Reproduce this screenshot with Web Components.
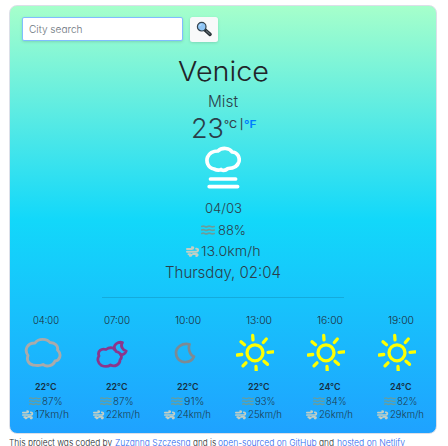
<!DOCTYPE html>
<html lang="en"><head><meta charset="utf-8"><title>Weather</title>
<style>
html,body{margin:0;overflow:hidden;background:#fff}
body{font-family:Inter,"Liberation Sans",sans-serif;font-weight:350;font-feature-settings:"cv11";color:#212529}
</style></head><body>
<weather-app></weather-app>
<script>
const define=(name,html,setup)=>customElements.define(name,class extends HTMLElement{
  connectedCallback(){
    if(this.shadowRoot)return;
    this.attachShadow({mode:'open'}).innerHTML=typeof html==='function'?html(this):html;
    if(setup)setup(this);
  }
});

/* A line of text stretched to a set width */
define('fit-text',`<style>:host{display:inline-block;white-space:pre;text-align:left;flex:none}span{display:inline-block;transform-origin:0 50%}</style><span><slot></slot></span>`,el=>{
  const span=el.shadowRoot.querySelector('span'),w=+el.getAttribute('w');
  el.style.width=w+'px';
  span.style.transform=`scaleX(${w/span.getBoundingClientRect().width})`;
});

const rays=[[16.7,2,17,6.5],[27.3,9,30.3,5.7],[32,18.8,37,18.5],[28,27.7,31.5,31],[20,33,20.2,37],[10,29.3,7,32.5],[1.3,21.5,5.7,21.2],[5,8.3,8.5,11.4]];
const icons={
  mist:[36,44,'#fff',3.7,`<path d="M9 23C2.5 22 1 15 2.6 11C5 5.5 10 5 13 5C17 1 25 2 27 6C32 6 35 11 34 15.5C32.5 21 27 22.5 23 22.5C20 25 17.5 24.5 16 23.5C13.5 25 11 24 9 23Z"/><path d="M5.5 33H30.6M4.2 40.6H32.6"/>`],
  cloudy:[38,32,'#aaa',2.9,`<path d="M9 29C4 28 2.5 23.5 4 19.5C0 14 3 7 11 7C14 2.2 23 2.2 26 6.5C31 6.5 34.5 10 33.5 14C38 18 36 24.5 31 25C29.5 29.5 23 31.5 19 28.5C15 30.3 12 29.5 9 29Z"/>`],
  nightcloud:[32,28,'#8b368c',2.8,`<path d="M5.5 25.5C1.5 23 1 18.5 3 16C1 11 5.5 8 10 9.5C14 6.5 19 7.5 20 11.5C25 12.5 27 17 24 20C24 25 18.5 27 14.5 25C11 27.5 8 26.5 5.5 25.5Z"/><path d="M18.5 9.5C17 4.5 22 1.5 26.5 2.5C24 6 26.5 10 30.2 11C29 14 27.5 15 24.5 14.5"/>`],
  moon:[22,22,'#7c8a94',2.7,`<path d="M15.5 2.3C8 .6 2 5 2 11C2 17 7 20.5 11.5 20C16 20 19 17 20 14.5C17 14 13.5 7.5 15.5 2.3Z"/>`],
  sun:[38,38,'#ff0',3.3,`<circle cx="19" cy="19.8" r="8"/>`+rays.map(r=>`<path d="M${r[0]} ${r[1]+.5}L${r[2]} ${r[3]+.3}"/>`).join('')],
  waves:[14,10,'#6a9d9b',1.6,[1.5,5,8.5].map(y=>`<path d="M.7 ${y}q1.5-.8 3 0t3 0t3 0t3.6 0"/>`).join('')],
  wind:[13,11,'#c3cfc4',2,`<path d="M1 3H5.5C8 3 7.6.9 6 1.2M1 5.8H10C12.8 5.8 12.6 2.3 10.2 2.8M2.5 8.2H4C6 8.2 5.8 10.2 4 9.8M7 8H10.2C12.2 8 12 10.2 10.2 9.9"/>`]
};
define('weather-icon',el=>{
  const [w,h,c,s,d]=icons[el.getAttribute('name')],k=+(el.getAttribute('scale')||1);
  return `<style>:host{display:inline-flex;flex:none}</style><svg width="${w*k}" height="${h*k}" viewBox="0 0 ${w} ${h}" fill="none" stroke="${c}" stroke-width="${s}" stroke-linecap="round" stroke-linejoin="round">${d}</svg>`;
});

define('search-bar',`<style>
:host{display:flex;gap:7px;padding:11px 12px;height:26px;align-items:flex-start}
.field{box-sizing:border-box;width:161px;height:24px;border:1px solid #80bdff;border-radius:2px;background:#fff;padding-left:5.5px;font-size:10.4px;line-height:23px;color:#6c757d;box-shadow:0 1px 3px #0002}
.go{width:28px;height:25px;border-radius:2.5px;background:#f8f9fa;box-shadow:0 1px 3px #0002;display:flex;align-items:center;justify-content:center}
svg{margin-top:-2px}
</style><div class="field"><fit-text w="53.5">City search</fit-text></div><div class="go">
<svg width="16" height="16" viewBox="0 0 16 16"><path d="M8.5 8.5L14 13.4" stroke="#222b30" stroke-width="3.5" stroke-linecap="round"/><path d="M10.5 10.1L13.8 13" stroke="#596269" stroke-width="1.5" stroke-linecap="round"/><circle cx="5.7" cy="5.7" r="4.3" fill="#8fc5f5" stroke="#34444f" stroke-width="1.2"/><path d="M3.5 5.2Q4 3.7 5.5 3.4" stroke="#c8e6ff" fill="none"/></svg></div>`);

define('current-weather',`<style>
:host{display:grid;grid-template-rows:35px 24px 30px 54px 23px 20px 22px 20px 30px;justify-items:center;color:#2b3e4a}
div{display:flex;align-items:center;line-height:1}
.city{font-size:27.3px;color:#212529}.mist{font-size:16.2px}
.temp{font-size:27px;padding-left:1px;align-items:flex-start}.temp>fit-text{padding-top:1.5px}.unit{font-size:10.2px;font-weight:500;height:22px;color:#343f48}
.unit b{font-weight:600;color:#007bff}
.icon{align-items:flex-start;padding-top:3px;box-sizing:border-box}
.s{font-size:13px}.day{font-size:16.4px}
hr{width:242px;height:1px;border:0;margin:0;align-self:center;background:#00000020}
</style>
<div class="city"><fit-text w="91">Venice</fit-text></div>
<div class="mist"><fit-text w="30">Mist</fit-text></div>
<div class="temp"><fit-text w="33">23</fit-text><div class="unit"><fit-text w="13">°C</fit-text><fit-text w="6.5"> |</fit-text><b><fit-text w="12.5">°F</fit-text></b></div></div>
<div class="icon"><weather-icon name="mist"></weather-icon></div>
<div class="s"><fit-text w="37">04/03</fit-text></div>
<div class="s" style="gap:3px"><weather-icon name="waves"></weather-icon><fit-text w="28">88%</fit-text></div>
<div class="s" style="gap:2px"><weather-icon name="wind"></weather-icon><fit-text w="59.5">13.0km/h</fit-text></div>
<div class="day"><fit-text w="116">Thursday, 02:04</fit-text></div>
<hr>`);

define('forecast-hour',el=>{const a=n=>el.getAttribute(n);return `<style>
:host{display:grid;grid-template-rows:18px 48px 18px 11px 16px;justify-items:center;font-size:9.8px;color:#1d3b50}
div{display:flex;align-items:center;line-height:1}
.t{color:#1d2c38}.c{font-weight:600;color:#172f43;font-size:9.4px}
.i{transform:translate(${a('dx')||0}px,${a('dy')||0}px)}
</style><div class="t"><fit-text w="26">${a('time')}</fit-text></div>
<div class="i"><weather-icon name="${a('icon')}"></weather-icon></div>
<div class="c"><fit-text w="21.5">${a('temp')}</fit-text></div>
<div style="gap:1px"><weather-icon name="waves" scale=".84"></weather-icon><fit-text w="20.5">${a('hum')}</fit-text></div>
<div style="gap:1px"><weather-icon name="wind" scale=".86"></weather-icon><fit-text w="34">${a('wind')}</fit-text></div>`});

define('forecast-row',`<style>:host{display:grid;grid-template-columns:repeat(6,1fr);height:121px}</style>`+
[['04:00','cloudy',-3,-2,'22°C','87%','17'],['07:00','nightcloud',-5,0,'22°C','87%','22'],['10:00','moon',-3,-1,'22°C','91%','24'],['13:00','sun',-4,-2,'22°C','93%','25'],['16:00','sun',-4,-2,'24°C','84%','26'],['19:00','sun',-4,-2,'24°C','82%','29']]
.map(h=>`<forecast-hour time="${h[0]}" icon="${h[1]}" dx="${h[2]}" dy="${h[3]}" temp="${h[4]}" hum="${h[5]}" wind="${h[6]}km/h"></forecast-hour>`).join(''));

define('weather-card',`<style>:host{display:block;box-sizing:border-box;width:428px;height:429px;border:1px solid #dcdfe8;border-radius:8px;background:linear-gradient(#a6ffcb,#12d8fa 50%,#1fa2ff)}</style><slot></slot>`);

define('site-credit',`<style>:host{display:flex;font-size:9.6px;line-height:20px;color:#212529}a{color:#2b67ee}</style>
<fit-text w="105.5">This project was coded by </fit-text><a><fit-text w="78">Zuzanna Szczesna </fit-text></a><fit-text w="25.5">and is </fit-text><a><fit-text w="101">open-sourced on GitHub </fit-text></a><fit-text w="17.5">and </fit-text><a><fit-text w="68">hosted on Netlify</fit-text></a>`);

define('weather-app',`<style>:host{display:block;height:446px;overflow:hidden;padding:5px 0 0 9px;box-sizing:border-box}site-credit{margin-top:-1px}</style>
<weather-card><search-bar></search-bar><current-weather></current-weather><forecast-row></forecast-row></weather-card><site-credit></site-credit>`);
</script></body></html>
